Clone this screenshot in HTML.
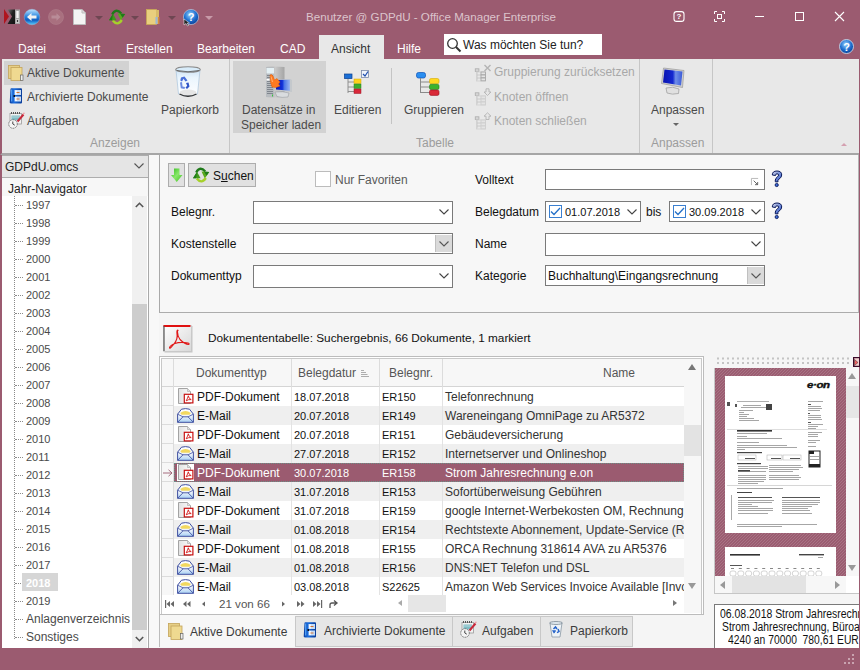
<!DOCTYPE html>
<html><head><meta charset="utf-8">
<style>
*{box-sizing:border-box;margin:0;padding:0}
html,body{width:860px;height:670px;overflow:hidden;background:#9b5b70;font-family:"Liberation Sans",sans-serif;font-size:12px;color:#222}
.a{position:absolute}
.t{position:absolute;white-space:nowrap;line-height:14px}
svg{position:absolute;overflow:visible}
.rb{color:#4a4a4a}
.gl{color:#9c9c9c}
.dis{color:#a8a8a8}
</style></head><body>
<!-- ============ TITLE BAR ============ -->
<!-- app logo -->
<svg style="left:4px;top:9px" width="17" height="16" viewBox="0 0 17 16">
<defs><linearGradient id="glogo" x1="0" y1="0" x2="1" y2="1"><stop offset="0" stop-color="#777"/><stop offset="0.45" stop-color="#222"/><stop offset="1" stop-color="#111"/></linearGradient></defs>
<polygon points="0,0 5,7.5 0,15" fill="#b0141e"/>
<polygon points="3.5,0.5 11,0.5 11,15 3.5,15 8,7.5" fill="url(#glogo)"/>
<rect x="11" y="0.5" width="5" height="14.5" fill="#a6a6a6"/>
<rect x="12.3" y="2" width="2.4" height="7" fill="#f4f4f4"/>
<rect x="12" y="10.5" width="3" height="3" fill="#f4f4f4"/>
<rect x="12.7" y="11.2" width="1.6" height="1.6" fill="#111"/>
</svg>
<!-- back -->
<svg style="left:24px;top:9px" width="16" height="16" viewBox="0 0 16 16">
<defs><linearGradient id="gb" x1="0" y1="0" x2="0" y2="1"><stop offset="0" stop-color="#bfe4ff"/><stop offset="0.45" stop-color="#2f8ae0"/><stop offset="0.7" stop-color="#0f5cc0"/><stop offset="1" stop-color="#5ad0ff"/></linearGradient></defs>
<circle cx="8" cy="8" r="7.8" fill="url(#gb)" stroke="#8fb8e0" stroke-width="0.4"/>
<path d="M3 8 L7.5 4 V6.5 H12.5 V9.5 H7.5 V12 Z" fill="#f2f2f2"/>
</svg>
<!-- forward disabled -->
<svg style="left:48px;top:9px" width="16" height="16" viewBox="0 0 16 16">
<circle cx="8" cy="8" r="7.5" fill="#a9707f" stroke="#b07d8b" stroke-width="0.6"/>
<path d="M12.5 8 L8.5 4.3 V6.6 H3.5 V9.4 H8.5 V11.7 Z" fill="#b98c98"/>
</svg>
<!-- new doc -->
<svg style="left:73px;top:9px" width="13" height="16" viewBox="0 0 13 16">
<path d="M0.5 0.5 H9 L12.5 4 V15.5 H0.5 Z" fill="#f4f4f4" stroke="#bdbdbd"/>
<path d="M9 0.5 V4 H12.5" fill="#ddd" stroke="#bdbdbd"/>
</svg>
<div class="a" style="left:95px;top:16px;width:0;height:0;border-left:4px solid transparent;border-right:4px solid transparent;border-top:4px solid #6e4652"></div>
<!-- refresh green -->
<svg style="left:108px;top:8px" width="18" height="18" viewBox="0 0 18 18">
<path d="M4.2 6.5 Q8 -0.5 13.2 5.5" fill="none" stroke="#1f7a1a" stroke-width="2.4"/>
<polygon points="9.5,5.5 17.2,6 12.8,12.5" fill="#5aa81e"/>
<polygon points="12,5.6 17.2,6 14.6,9.8" fill="#1f7a1a"/>
<path d="M13.8 12 Q9.5 18.5 4.8 12.5" fill="none" stroke="#a6d12a" stroke-width="2.4"/>
<polygon points="1,12.2 8.6,12.2 5,5.8" fill="#3f9a1a"/>
<polygon points="1,12.2 5,5.8 4,12.2" fill="#1f7a1a"/>
</svg>
<div class="a" style="left:131px;top:16px;width:0;height:0;border-left:4px solid transparent;border-right:4px solid transparent;border-top:4px solid #6e4652"></div>
<!-- folder -->
<svg style="left:146px;top:9px" width="14" height="16" viewBox="0 0 14 16">
<rect x="0.5" y="0.5" width="10" height="15" fill="#e9cf7e" stroke="#c9a855" stroke-width="0.8"/>
<rect x="10" y="1" width="3" height="14" fill="#d9bb68"/>
<rect x="9.5" y="8" width="2" height="7" fill="#9ab6d8"/>
<rect x="12" y="8" width="1.5" height="7" fill="#d88a3a"/>
</svg>
<div class="a" style="left:168px;top:16px;width:0;height:0;border-left:4px solid transparent;border-right:4px solid transparent;border-top:4px solid #6e4652"></div>
<!-- help circle -->
<svg style="left:183px;top:9px" width="16" height="16" viewBox="0 0 16 16">
<defs><radialGradient id="gh" cx="45%" cy="35%" r="65%"><stop offset="0" stop-color="#9ad4ff"/><stop offset="0.6" stop-color="#1e6fd0"/><stop offset="1" stop-color="#0b3f96"/></radialGradient></defs>
<circle cx="8" cy="8" r="7.6" fill="url(#gh)" stroke="#c8d8ea" stroke-width="0.6"/>
<text x="8" y="12" font-family="Liberation Sans" font-weight="bold" font-size="11" fill="#fff" text-anchor="middle">?</text>
<path d="M1 10 L1 16 L3 14.5 L4.5 17 L5.5 16.5 L4.3 14 L6.5 14 Z" fill="#222" stroke="#fff" stroke-width="0.5"/>
</svg>
<div class="a" style="left:205px;top:16px;width:0;height:0;border-left:4px solid transparent;border-right:4px solid transparent;border-top:4px solid #c79aa8"></div>

<div class="t" style="left:306px;top:10px;color:#dcc4cc;font-size:11.6px">Benutzer @ GDPdU - Office Manager Enterprise</div>

<!-- window buttons -->
<svg style="left:673px;top:11px" width="12" height="11" viewBox="0 0 12 11">
<rect x="1" y="0.6" width="10" height="9.8" rx="2.5" fill="none" stroke="#fff" stroke-width="1.1"/>
<text x="6" y="8.4" font-family="Liberation Sans" font-weight="bold" font-size="8" fill="#fff" text-anchor="middle">?</text>
</svg>
<svg style="left:714px;top:11px" width="11" height="11" viewBox="0 0 11 11">
<path d="M0.5 3 V0.5 H3 M8 0.5 H10.5 V3 M10.5 8 V10.5 H8 M3 10.5 H0.5 V8" fill="none" stroke="#fff" stroke-width="1"/>
<rect x="3.5" y="3.5" width="4" height="4" fill="none" stroke="#fff" stroke-width="1"/>
</svg>
<div class="a" style="left:755px;top:16px;width:9px;height:1px;background:#fff"></div>
<div class="a" style="left:795px;top:12px;width:9px;height:9px;border:1px solid #fff"></div>
<svg style="left:835px;top:12px" width="9" height="9" viewBox="0 0 9 9">
<path d="M0 0 L9 9 M9 0 L0 9" stroke="#fff" stroke-width="1.1"/>
</svg>

<!-- ============ TABS ============ -->
<div class="t" style="left:18px;top:42px;color:#fff">Datei</div>
<div class="t" style="left:75px;top:42px;color:#fff">Start</div>
<div class="t" style="left:126px;top:42px;color:#fff">Erstellen</div>
<div class="t" style="left:197px;top:42px;color:#fff">Bearbeiten</div>
<div class="t" style="left:280px;top:42px;color:#fff">CAD</div>
<div class="a" style="left:319px;top:35px;width:65px;height:25px;background:#e8e8e8"></div>
<div class="t" style="left:331px;top:42px;color:#333">Ansicht</div>
<div class="t" style="left:397px;top:42px;color:#fff">Hilfe</div>
<div class="a" style="left:444px;top:34px;width:158px;height:21px;background:#fff"></div>
<svg style="left:446px;top:37px" width="16" height="16" viewBox="0 0 16 16">
<circle cx="6.5" cy="6.5" r="4.8" fill="none" stroke="#333" stroke-width="1.3"/>
<path d="M10 10 L14.5 14.5" stroke="#333" stroke-width="2"/>
</svg>
<div class="t" style="left:463px;top:38px;color:#222">Was möchten Sie tun?</div>
<svg style="left:839px;top:39px" width="15" height="15" viewBox="0 0 15 15">
<circle cx="7.5" cy="7.5" r="7" fill="url(#gh)" stroke="#d8e4f0" stroke-width="0.8"/>
<text x="7.5" y="11.5" font-family="Liberation Sans" font-weight="bold" font-size="11" fill="#fff" text-anchor="middle">?</text>
</svg>

<!-- ============ RIBBON ============ -->
<div class="a" style="left:0;top:59px;width:859px;height:96px;background:#e8e8e8;border-left:2px solid #9b5b70;border-bottom:2px solid #a6a6a6"></div>

<!-- Anzeigen group -->
<div class="a" style="left:4px;top:61px;width:125px;height:24px;background:#d2d2d2"></div>
<svg style="left:8px;top:65px" width="16" height="16" viewBox="0 0 16 16">
<rect x="0.5" y="0.5" width="11" height="13" fill="#e6cf86" stroke="#c4a45a" stroke-width="0.8"/>
<rect x="3" y="2.5" width="11" height="13" fill="#efd990" stroke="#c4a45a" stroke-width="0.8"/>
<rect x="12.5" y="10" width="2.5" height="5.5" fill="#eee" stroke="#666" stroke-width="0.7"/>
</svg>
<div class="t rb" style="left:27px;top:66px">Aktive Dokumente</div>
<svg style="left:9px;top:88px" width="14" height="16" viewBox="0 0 14 16">
<defs><linearGradient id="ga1" x1="0" x2="1"><stop offset="0" stop-color="#0b3fa0"/><stop offset="0.35" stop-color="#1a6ee0"/><stop offset="1" stop-color="#0a3c98"/></linearGradient></defs>
<path d="M1.5 1 Q1.5 0.2 2.5 0.2 H12 Q13 0.2 13 1.2 V14.5 Q13 15.5 12 15.5 H2.5 Q0.7 15.5 0.7 14.5 Z" fill="url(#ga1)"/>
<rect x="2" y="1.5" width="1.3" height="12" fill="#5fb0ff" opacity="0.8"/>
<path d="M5.5 2 H12 V7 H5.5 Z" fill="#c8dcf4"/>
<path d="M5.5 8.5 H12 V13.5 H5.5 Z" fill="#c8dcf4"/>
<rect x="6" y="2.5" width="2" height="4" fill="#fff" opacity="0.8"/>
<rect x="6" y="9" width="2" height="4" fill="#fff" opacity="0.8"/>
<rect x="7.5" y="4" width="3" height="1" fill="#d07030"/>
<rect x="7.5" y="10.5" width="3" height="1" fill="#d07030"/>
<rect x="4.5" y="7" width="1.5" height="2" fill="#111"/>
</svg>
<div class="t rb" style="left:27px;top:90px">Archivierte Dokumente</div>
<svg style="left:8px;top:112px" width="17" height="17" viewBox="0 0 17 17">
<rect x="2" y="1.5" width="11.5" height="10.5" fill="#f2f2f2" stroke="#9a9a9a" stroke-width="0.8"/>
<g fill="#555"><rect x="3" y="0" width="1" height="2"/><rect x="5" y="0" width="1" height="2"/><rect x="7" y="0" width="1" height="2"/><rect x="9" y="0" width="1" height="2"/><rect x="11" y="0" width="1" height="2"/></g>
<rect x="3.5" y="3.5" width="8.5" height="5" fill="#7fbcc4"/>
<g fill="#e8f4f6"><rect x="4.5" y="4.5" width="1" height="1"/><rect x="6.5" y="4.5" width="1" height="1"/><rect x="8.5" y="4.5" width="1" height="1"/><rect x="10.5" y="4.5" width="1" height="1"/></g>
<path d="M9.5 9.5 L15.5 2.5" stroke="#c8283a" stroke-width="2"/>
<path d="M15 2 L16.5 0.8" stroke="#f0a0a8" stroke-width="1.5"/>
<circle cx="5" cy="12" r="4.3" fill="#f4f4f4" stroke="#666" stroke-width="0.9" stroke-dasharray="1.2 0.6"/>
<path d="M4.8 9.5 V12 L6.8 13.2" stroke="#333" stroke-width="0.9" fill="none"/>
</svg>
<div class="t rb" style="left:27px;top:114px">Aufgaben</div>
<svg style="left:168px;top:62px" width="40" height="40" viewBox="0 0 40 40">
<defs><linearGradient id="gt" x1="0" y1="0" x2="0" y2="1"><stop offset="0" stop-color="#cfe4f6"/><stop offset="0.3" stop-color="#eaf5fd"/><stop offset="1" stop-color="#ffffff"/></linearGradient></defs>
<path d="M8 8 L10.5 32 Q20 36 29.5 32 L32 8 Z" fill="url(#gt)" stroke="#a9c4dc" stroke-width="0.7"/>
<ellipse cx="20" cy="30.5" rx="8.5" ry="3" fill="#e6e6e6"/>
<path d="M11.5 32 Q20 36.5 28.5 32" fill="none" stroke="#333" stroke-width="1.3"/>
<ellipse cx="20" cy="7.5" rx="12.3" ry="2.8" fill="#d8ecfa" stroke="#8a8a8a" stroke-width="1.1"/>
<path d="M9 8.5 Q20 11 31 8.5" fill="none" stroke="#555" stroke-width="0.8"/>
<path d="M13 15.5 L16.5 14.5 L19.5 18.5 L17.5 19.5 L15.5 16.8 L14 19.5 L12.3 18.5 Z" fill="#4a70d8"/>
<path d="M12 20.5 L14 20 L14.5 24.5 L17 25 L16.5 27 L12.8 26.2 Z" fill="#6a8ae0"/>
<path d="M18 21 L20.5 20.5 L21.5 24.5 L19 27 L17.5 25.5 L19.2 23.8 Z" fill="#2f55c8"/>
</svg>
<div class="t rb" style="left:161px;top:103px">Papierkorb</div>
<div class="t gl" style="left:90px;top:136px">Anzeigen</div>
<div class="a" style="left:229px;top:59px;width:1px;height:94px;background:#c6c6c6"></div>
<!-- Tabelle group -->
<div class="a" style="left:233px;top:61px;width:93px;height:72px;background:#d2d2d2"></div>
<svg style="left:258px;top:62px" width="40" height="40" viewBox="0 0 40 40">
<defs><linearGradient id="gs" x1="0" x2="1"><stop offset="0" stop-color="#9a9a9a"/><stop offset="0.5" stop-color="#c9c9c9"/><stop offset="1" stop-color="#a5a5a5"/></linearGradient>
<linearGradient id="gm" x1="0" y1="0" x2="1" y2="0"><stop offset="0" stop-color="#0a18b8"/><stop offset="0.45" stop-color="#1030d8"/><stop offset="0.6" stop-color="#4d78e8"/><stop offset="1" stop-color="#9ab6f0"/></linearGradient></defs>
<path d="M8 5 L16 4.5 L26.5 5 V35 L16 35.5 L8 35 Z" fill="url(#gs)"/>
<rect x="8" y="5" width="8" height="30" fill="#b8bcc0"/>
<rect x="8.5" y="6" width="7.5" height="5.5" fill="#e4f0f4"/>
<g fill="#7a8088"><rect x="9" y="13" width="6" height="0.9"/><rect x="9" y="15" width="6" height="0.9"/><rect x="9" y="19" width="6" height="0.9"/><rect x="9" y="21" width="6" height="0.9"/><rect x="9" y="23" width="6" height="0.9"/><rect x="9" y="25" width="6" height="0.9"/><rect x="9" y="27" width="6" height="0.9"/><rect x="9" y="29" width="6" height="0.9"/><rect x="9" y="31" width="6" height="0.9"/></g>
<rect x="8.5" y="17" width="3" height="1.5" fill="#fff"/>
<rect x="14" y="32.5" width="1" height="2" fill="#3ac040"/>
<path d="M17.5 17.5 L32.5 17 L34 18 V30 L17.5 28.5 Z" fill="#c4c8cc"/>
<path d="M18 18 L32 17.8 V28.8 L18 27.5 Z" fill="url(#gm)"/>
<path d="M17 30 Q25 29 31 31 L30 35 Q24 36 19 34.5 Z" fill="#d9dcdf" stroke="#9a9ea2" stroke-width="0.6"/>
<path d="M12 13 Q13.5 11.5 15 14 L16.5 18 L19 16.5 L22 20 L20.5 22 L22 24 L18 25.5 L14 25 L12.5 20 Z" fill="#ff7a20" stroke="#e05a00" stroke-width="0.5"/>
<path d="M13 14.5 L14.5 20" stroke="#ffb070" stroke-width="1"/>
</svg>
<div class="t rb" style="left:242px;top:103px">Datensätze in</div>
<div class="t rb" style="left:241px;top:118px">Speicher laden</div>
<svg style="left:344px;top:70px" width="26" height="26" viewBox="0 0 26 26">
<rect x="0.5" y="4" width="7.5" height="4.6" fill="#1b6fd6" stroke="#0b3f8f" stroke-width="0.7"/>
<path d="M4 9 V23 M4 12 H10 M4 17 H10 M4 21.5 H10" stroke="#888" stroke-width="0.9" fill="none"/>
<rect x="10" y="9" width="7" height="4.5" fill="#ffd21a" stroke="#d8a800" stroke-width="0.5"/>
<rect x="10" y="14" width="7" height="4.5" fill="#3cae2c" stroke="#2a7f1f" stroke-width="0.5"/>
<rect x="10" y="19" width="7" height="4.5" fill="#d8283a" stroke="#9a1424" stroke-width="0.5"/>
<rect x="17.5" y="0.5" width="7" height="7" fill="#f0f4fa" stroke="#7a8aa8" stroke-width="0.8"/>
<path d="M19 4 L21 6 L24 1.5" stroke="#1f4fb0" stroke-width="1.2" fill="none"/>
</svg>
<div class="t rb" style="left:334px;top:103px">Editieren</div>
<div class="a" style="left:391px;top:68px;width:1px;height:56px;background:#c4c4c4"></div>
<svg style="left:416px;top:72px" width="24" height="24" viewBox="0 0 24 24">
<rect x="0.5" y="0.5" width="9" height="5.5" rx="2" fill="#2a8ef0" stroke="#0d52b8" stroke-width="0.7"/>
<path d="M4.5 6 V21 M4.5 10 H14 M4.5 15 H14 M4.5 20.5 H14" stroke="#8a8a8a" stroke-width="1" fill="none"/>
<rect x="13.5" y="6.5" width="9.5" height="5.2" rx="1.6" fill="#ffd920" stroke="#d7aa00" stroke-width="0.6"/>
<rect x="13.5" y="12.3" width="9.5" height="5.2" rx="1.6" fill="#3db32c" stroke="#257d1b" stroke-width="0.6"/>
<rect x="13.5" y="18" width="9.5" height="5.4" rx="1.6" fill="#d92a38" stroke="#9a1020" stroke-width="0.6"/>
</svg>
<div class="t rb" style="left:404px;top:103px">Gruppieren</div>
<svg style="left:474px;top:64px" width="18" height="18" viewBox="0 0 18 18">
<rect x="1.3" y="4.8" width="3.6" height="2.6" fill="#d8d8d8" stroke="#b0b0b0" stroke-width="0.9"/>
<path d="M3 7.5 V16.5 M3 11 H7 M3 14 H7" stroke="#c6c6c6" stroke-width="0.9" fill="none"/>
<rect x="2.5" y="8" width="9" height="9" fill="none" stroke="#d0d0d0" stroke-width="0.8"/>
<rect x="7" y="8" width="4.5" height="2.8" fill="#e4e4e4" stroke="#a8a8a8" stroke-width="0.9"/>
<rect x="7" y="11" width="4.5" height="2.8" fill="#e4e4e4" stroke="#a8a8a8" stroke-width="0.9"/>
<rect x="7" y="14" width="4.5" height="2.8" fill="#e4e4e4" stroke="#a8a8a8" stroke-width="0.9"/>
<path d="M10.5 1 L16.5 7 M16.5 1 L10.5 7" stroke="#b4b4b4" stroke-width="1.4"/>
</svg>
<div class="t dis" style="left:494px;top:65px">Gruppierung zurücksetzen</div>
<svg style="left:474px;top:88px" width="18" height="18" viewBox="0 0 18 18">
<rect x="1.3" y="4.8" width="3.6" height="2.6" fill="#d8d8d8" stroke="#b0b0b0" stroke-width="0.9"/>
<path d="M3 7.5 V16.5 M3 11 H7 M3 14 H7" stroke="#c6c6c6" stroke-width="0.9" fill="none"/>
<rect x="2.5" y="8" width="9" height="9" fill="none" stroke="#d0d0d0" stroke-width="0.8"/>
<rect x="7" y="8" width="4.5" height="2.8" fill="#e4e4e4" stroke="#cfcfcf" stroke-width="0.9"/>
<rect x="7" y="11" width="4.5" height="2.8" fill="#e4e4e4" stroke="#cfcfcf" stroke-width="0.9"/>
<rect x="7" y="14" width="4.5" height="2.8" fill="#e4e4e4" stroke="#cfcfcf" stroke-width="0.9"/>
<path d="M12 0.8 H15 V4 H17 L13.5 7.5 L10 4 H12 Z" fill="#e6e6e6" stroke="#b4b4b4" stroke-width="0.9"/>
</svg>
<div class="t dis" style="left:494px;top:90px">Knoten öffnen</div>
<svg style="left:474px;top:112px" width="18" height="18" viewBox="0 0 18 18">
<rect x="1.3" y="4.8" width="3.6" height="2.6" fill="#d8d8d8" stroke="#b0b0b0" stroke-width="0.9"/>
<path d="M3 7.5 V16.5 M3 11 H7 M3 14 H7" stroke="#c6c6c6" stroke-width="0.9" fill="none"/>
<rect x="2.5" y="8" width="9" height="9" fill="none" stroke="#d0d0d0" stroke-width="0.8"/>
<rect x="7" y="8" width="4.5" height="2.8" fill="#e4e4e4" stroke="#cfcfcf" stroke-width="0.9"/>
<rect x="7" y="11" width="4.5" height="2.8" fill="#e4e4e4" stroke="#cfcfcf" stroke-width="0.9"/>
<rect x="7" y="14" width="4.5" height="2.8" fill="#e4e4e4" stroke="#cfcfcf" stroke-width="0.9"/>
<path d="M12 7.5 H15 V4.2 H17 L13.5 0.8 L10 4.2 H12 Z" fill="#e6e6e6" stroke="#b4b4b4" stroke-width="0.9"/>
</svg>
<div class="t dis" style="left:494px;top:114px">Knoten schließen</div>
<div class="t gl" style="left:416px;top:136px">Tabelle</div>
<div class="a" style="left:639px;top:59px;width:1px;height:94px;background:#c6c6c6"></div>
<!-- Anpassen -->
<svg style="left:652px;top:62px" width="40" height="40" viewBox="0 0 40 40">
<defs><linearGradient id="gmon" x1="0" y1="0" x2="1" y2="0"><stop offset="0" stop-color="#0a14b0"/><stop offset="0.5" stop-color="#1428d0"/><stop offset="0.65" stop-color="#6f8ee8"/><stop offset="1" stop-color="#3a5ad8"/></linearGradient></defs>
<path d="M14 26 Q21 24 27 27 L26.5 31.5 Q20 33 15 31 Z" fill="#e0e0e0" stroke="#9a9a9a" stroke-width="0.7"/>
<path d="M11.5 6 L32 8.5 L30.5 25.5 L9.5 21.5 Z" fill="#cfcfcf" stroke="#9a9a9a" stroke-width="0.7"/>
<path d="M12.5 7.5 L30.5 9.5 L29 23.5 L11 20.5 Z" fill="url(#gmon)"/>
</svg>
<div class="t rb" style="left:651px;top:103px">Anpassen</div>
<div class="a" style="left:673px;top:123px;width:0;height:0;border-left:3px solid transparent;border-right:3px solid transparent;border-top:3px solid #666"></div>
<div class="t gl" style="left:651px;top:136px">Anpassen</div>
<div class="a" style="left:712px;top:59px;width:1px;height:94px;background:#c6c6c6"></div>
<div class="a" style="left:841px;top:143px;width:0;height:0;border-left:3px solid transparent;border-right:3px solid transparent;border-bottom:3px solid #d4a0b0"></div>

<!-- ============ LEFT PANEL ============ -->
<div class="a" style="left:2px;top:155px;width:147px;height:493px;background:#fff"></div>
<div class="a" style="left:2px;top:155px;width:147px;height:23px;background:#e5e5e5;border:1px solid #adadad;border-left:none"></div>
<div class="t" style="left:5px;top:160px;color:#222">GDPdU.omcs</div>
<svg style="left:134px;top:163px" width="10" height="6" viewBox="0 0 10 6"><path d="M0.5 0.5 L5 5 L9.5 0.5" fill="none" stroke="#555" stroke-width="1.1"/></svg>
<div class="a" style="left:2px;top:178px;width:146px;height:18px;background:#f7f7f7"></div>
<div class="t" style="left:8px;top:182px;color:#222">Jahr-Navigator</div>
<div class="a" style="left:14px;top:196px;width:0;height:443px;border-left:1px dotted #8a8a8a"></div>
<div class="a" style="left:15px;top:205px;width:8px;height:0;border-top:1px dotted #8a8a8a"></div>
<div class="t" style="left:26px;top:198px;color:#4a4a4a;font-size:11px">1997</div>
<div class="a" style="left:15px;top:223px;width:8px;height:0;border-top:1px dotted #8a8a8a"></div>
<div class="t" style="left:26px;top:216px;color:#4a4a4a;font-size:11px">1998</div>
<div class="a" style="left:15px;top:241px;width:8px;height:0;border-top:1px dotted #8a8a8a"></div>
<div class="t" style="left:26px;top:234px;color:#4a4a4a;font-size:11px">1999</div>
<div class="a" style="left:15px;top:259px;width:8px;height:0;border-top:1px dotted #8a8a8a"></div>
<div class="t" style="left:26px;top:252px;color:#4a4a4a;font-size:11px">2000</div>
<div class="a" style="left:15px;top:277px;width:8px;height:0;border-top:1px dotted #8a8a8a"></div>
<div class="t" style="left:26px;top:270px;color:#4a4a4a;font-size:11px">2001</div>
<div class="a" style="left:15px;top:295px;width:8px;height:0;border-top:1px dotted #8a8a8a"></div>
<div class="t" style="left:26px;top:288px;color:#4a4a4a;font-size:11px">2002</div>
<div class="a" style="left:15px;top:313px;width:8px;height:0;border-top:1px dotted #8a8a8a"></div>
<div class="t" style="left:26px;top:306px;color:#4a4a4a;font-size:11px">2003</div>
<div class="a" style="left:15px;top:331px;width:8px;height:0;border-top:1px dotted #8a8a8a"></div>
<div class="t" style="left:26px;top:324px;color:#4a4a4a;font-size:11px">2004</div>
<div class="a" style="left:15px;top:349px;width:8px;height:0;border-top:1px dotted #8a8a8a"></div>
<div class="t" style="left:26px;top:342px;color:#4a4a4a;font-size:11px">2005</div>
<div class="a" style="left:15px;top:367px;width:8px;height:0;border-top:1px dotted #8a8a8a"></div>
<div class="t" style="left:26px;top:360px;color:#4a4a4a;font-size:11px">2006</div>
<div class="a" style="left:15px;top:385px;width:8px;height:0;border-top:1px dotted #8a8a8a"></div>
<div class="t" style="left:26px;top:378px;color:#4a4a4a;font-size:11px">2007</div>
<div class="a" style="left:15px;top:403px;width:8px;height:0;border-top:1px dotted #8a8a8a"></div>
<div class="t" style="left:26px;top:396px;color:#4a4a4a;font-size:11px">2008</div>
<div class="a" style="left:15px;top:421px;width:8px;height:0;border-top:1px dotted #8a8a8a"></div>
<div class="t" style="left:26px;top:414px;color:#4a4a4a;font-size:11px">2009</div>
<div class="a" style="left:15px;top:439px;width:8px;height:0;border-top:1px dotted #8a8a8a"></div>
<div class="t" style="left:26px;top:432px;color:#4a4a4a;font-size:11px">2010</div>
<div class="a" style="left:15px;top:457px;width:8px;height:0;border-top:1px dotted #8a8a8a"></div>
<div class="t" style="left:26px;top:450px;color:#4a4a4a;font-size:11px">2011</div>
<div class="a" style="left:15px;top:475px;width:8px;height:0;border-top:1px dotted #8a8a8a"></div>
<div class="t" style="left:26px;top:468px;color:#4a4a4a;font-size:11px">2012</div>
<div class="a" style="left:15px;top:493px;width:8px;height:0;border-top:1px dotted #8a8a8a"></div>
<div class="t" style="left:26px;top:486px;color:#4a4a4a;font-size:11px">2013</div>
<div class="a" style="left:15px;top:511px;width:8px;height:0;border-top:1px dotted #8a8a8a"></div>
<div class="t" style="left:26px;top:504px;color:#4a4a4a;font-size:11px">2014</div>
<div class="a" style="left:15px;top:529px;width:8px;height:0;border-top:1px dotted #8a8a8a"></div>
<div class="t" style="left:26px;top:522px;color:#4a4a4a;font-size:11px">2015</div>
<div class="a" style="left:15px;top:547px;width:8px;height:0;border-top:1px dotted #8a8a8a"></div>
<div class="t" style="left:26px;top:540px;color:#4a4a4a;font-size:11px">2016</div>
<div class="a" style="left:15px;top:565px;width:8px;height:0;border-top:1px dotted #8a8a8a"></div>
<div class="t" style="left:26px;top:558px;color:#4a4a4a;font-size:11px">2017</div>
<div class="a" style="left:15px;top:583px;width:8px;height:0;border-top:1px dotted #8a8a8a"></div>
<div class="a" style="left:22px;top:573px;width:36px;height:18px;background:#d6d6d6"></div>
<div class="t" style="left:26px;top:576px;color:#fff;font-weight:bold;font-size:11px">2018</div>
<div class="a" style="left:15px;top:601px;width:8px;height:0;border-top:1px dotted #8a8a8a"></div>
<div class="t" style="left:26px;top:594px;color:#4a4a4a;font-size:11px">2019</div>
<div class="a" style="left:15px;top:619px;width:8px;height:0;border-top:1px dotted #8a8a8a"></div>
<div class="t" style="left:26px;top:612px;color:#4a4a4a;font-size:12px">Anlagenverzeichnis</div>
<div class="a" style="left:15px;top:637px;width:8px;height:0;border-top:1px dotted #8a8a8a"></div>
<div class="t" style="left:26px;top:630px;color:#4a4a4a;font-size:12px">Sonstiges</div>

<div class="a" style="left:132px;top:196px;width:15px;height:452px;background:#f0f0f0"></div>
<div class="a" style="left:132px;top:304px;width:15px;height:326px;background:#cdcdcd"></div>
<svg style="left:135px;top:202px" width="9" height="6" viewBox="0 0 9 6"><path d="M0.8 5 L4.5 1.3 L8.2 5" fill="none" stroke="#555" stroke-width="1.6"/></svg>
<svg style="left:135px;top:636px" width="9" height="6" viewBox="0 0 9 6"><path d="M0.8 1 L4.5 4.7 L8.2 1" fill="none" stroke="#555" stroke-width="1.6"/></svg>
<div class="a" style="left:148px;top:155px;width:1px;height:493px;background:#a9a9a9"></div>
<div class="a" style="left:149px;top:155px;width:10px;height:493px;background:#f8f8f8"></div>

<!-- ============ SEARCH PANEL ============ -->
<div class="a" style="left:159px;top:155px;width:700px;height:158px;background:#f7f7f7;border-left:1px solid #a9a9a9;border-right:1px solid #b5b5b5;border-bottom:1px solid #acacac"></div>
<div class="a" style="left:168px;top:163px;width:17px;height:24px;background:#e1e1e1;border:1px solid #adadad"></div>
<svg style="left:171px;top:168px" width="12" height="15" viewBox="0 0 12 15">
<defs><linearGradient id="gg" x1="0" y1="0" x2="1" y2="1"><stop offset="0" stop-color="#2fb81c"/><stop offset="0.5" stop-color="#8ae86a"/><stop offset="1" stop-color="#3cc01e"/></linearGradient></defs>
<path d="M3 0.5 H8.5 V7 H11.5 L5.75 14 L0 7 H3 Z" fill="url(#gg)"/>
</svg>
<div class="a" style="left:188px;top:163px;width:68px;height:24px;background:#e1e1e1;border:1px solid #adadad"></div>
<svg style="left:192px;top:166px" width="18" height="18" viewBox="0 0 18 18">
<path d="M4.2 6.5 Q8 -0.5 13.2 5.5" fill="none" stroke="#1f7a1a" stroke-width="2.4"/>
<polygon points="9.5,5.5 17.2,6 12.8,12.5" fill="#5aa81e"/>
<polygon points="12,5.6 17.2,6 14.6,9.8" fill="#1f7a1a"/>
<path d="M13.8 12 Q9.5 18.5 4.8 12.5" fill="none" stroke="#a6d12a" stroke-width="2.4"/>
<polygon points="1,12.2 8.6,12.2 5,5.8" fill="#3f9a1a"/>
<polygon points="1,12.2 5,5.8 4,12.2" fill="#1f7a1a"/>
</svg>
<div class="t" style="left:213px;top:169px;color:#111">S<span style="text-decoration:underline">u</span>chen</div>
<div class="a" style="left:315px;top:171px;width:16px;height:16px;background:#fff;border:1px solid #bcbcbc"></div>
<div class="t" style="left:335px;top:173px;color:#5a5a5a">Nur Favoriten</div>

<div class="t" style="left:171px;top:205px;color:#111">Belegnr.</div>
<div class="t" style="left:171px;top:237px;color:#111">Kostenstelle</div>
<div class="t" style="left:171px;top:269px;color:#111">Dokumenttyp</div>
<div class="a" style="left:253px;top:201px;width:200px;height:23px;background:#fff;border:1px solid #7a7a7a"></div>
<svg style="left:439px;top:209px" width="10" height="6" viewBox="0 0 10 6"><path d="M0.5 0.5 L5 5 L9.5 0.5" fill="none" stroke="#444" stroke-width="1.1"/></svg>
<div class="a" style="left:253px;top:233px;width:200px;height:21px;background:#fff;border:1px solid #7a7a7a"></div>
<div class="a" style="left:435px;top:235px;width:17px;height:17px;background:#dadada;border-left:1px solid #c0c0c0"></div>
<svg style="left:439px;top:241px" width="10" height="6" viewBox="0 0 10 6"><path d="M0.5 0.5 L5 5 L9.5 0.5" fill="none" stroke="#555" stroke-width="1.1"/></svg>
<div class="a" style="left:253px;top:265px;width:200px;height:23px;background:#fff;border:1px solid #7a7a7a"></div>
<svg style="left:439px;top:273px" width="10" height="6" viewBox="0 0 10 6"><path d="M0.5 0.5 L5 5 L9.5 0.5" fill="none" stroke="#444" stroke-width="1.1"/></svg>

<div class="t" style="left:475px;top:173px;color:#111">Volltext</div>
<div class="t" style="left:475px;top:205px;color:#111">Belegdatum</div>
<div class="t" style="left:475px;top:237px;color:#111">Name</div>
<div class="t" style="left:475px;top:269px;color:#111">Kategorie</div>
<div class="a" style="left:545px;top:169px;width:220px;height:21px;background:#fff;border:1px solid #7a7a7a"></div>
<svg style="left:751px;top:178px" width="8" height="8" viewBox="0 0 9 9"><path d="M0.5 8 V0.5 H8" fill="none" stroke="#aaa" stroke-width="0.9"/><path d="M3 3 L7.5 7.5 M4.5 7.5 H7.5 V4.5" fill="none" stroke="#555" stroke-width="1"/></svg>
<svg style="left:771px;top:170px" width="12" height="18" viewBox="0 0 12 18">
<defs><linearGradient id="gq1" x1="0" y1="0" x2="1" y2="1"><stop offset="0" stop-color="#d8d8e8"/><stop offset="0.5" stop-color="#7890d8"/><stop offset="1" stop-color="#2f5ad0"/></linearGradient></defs>
<path d="M1.3 5 Q1.3 1 6 1 Q10.7 1 10.7 5 Q10.7 7.2 8.2 9 L7 10.3 V11.8 H4.3 V10 Q4.5 8.3 6.5 6.8 Q7.6 6 7.6 5 Q7.6 3.8 6 3.8 Q4.5 3.8 4.5 5.5 Z" fill="url(#gq1)" stroke="#0a1a5a" stroke-width="1"/>
<circle cx="5.7" cy="15" r="1.6" fill="#3a6ad8" stroke="#0a1a5a" stroke-width="0.9"/>
</svg>
<div class="a" style="left:545px;top:201px;width:96px;height:21px;background:#fff;border:1px solid #7a7a7a"></div>
<div class="a" style="left:549px;top:205px;width:13px;height:13px;background:#fff;border:1px solid #3a7fd0"></div>
<svg style="left:550px;top:207px" width="11" height="9" viewBox="0 0 11 9"><path d="M1 4.5 L4 7.5 L10 1" fill="none" stroke="#2470c8" stroke-width="1.3"/></svg>
<div class="t" style="left:565px;top:205px;color:#111;font-size:11px">01.07.2018</div>
<svg style="left:627px;top:209px" width="10" height="6" viewBox="0 0 10 6"><path d="M0.5 0.5 L5 5 L9.5 0.5" fill="none" stroke="#444" stroke-width="1.1"/></svg>
<div class="t" style="left:646px;top:205px;color:#111">bis</div>
<div class="a" style="left:669px;top:201px;width:96px;height:21px;background:#fff;border:1px solid #7a7a7a"></div>
<div class="a" style="left:673px;top:205px;width:13px;height:13px;background:#fff;border:1px solid #3a7fd0"></div>
<svg style="left:674px;top:207px" width="11" height="9" viewBox="0 0 11 9"><path d="M1 4.5 L4 7.5 L10 1" fill="none" stroke="#2470c8" stroke-width="1.3"/></svg>
<div class="t" style="left:689px;top:205px;color:#111;font-size:11px">30.09.2018</div>
<svg style="left:751px;top:209px" width="10" height="6" viewBox="0 0 10 6"><path d="M0.5 0.5 L5 5 L9.5 0.5" fill="none" stroke="#444" stroke-width="1.1"/></svg>
<svg style="left:771px;top:202px" width="12" height="18" viewBox="0 0 12 18">
<defs><linearGradient id="gq2" x1="0" y1="0" x2="1" y2="1"><stop offset="0" stop-color="#d8d8e8"/><stop offset="0.5" stop-color="#7890d8"/><stop offset="1" stop-color="#2f5ad0"/></linearGradient></defs>
<path d="M1.3 5 Q1.3 1 6 1 Q10.7 1 10.7 5 Q10.7 7.2 8.2 9 L7 10.3 V11.8 H4.3 V10 Q4.5 8.3 6.5 6.8 Q7.6 6 7.6 5 Q7.6 3.8 6 3.8 Q4.5 3.8 4.5 5.5 Z" fill="url(#gq2)" stroke="#0a1a5a" stroke-width="1"/>
<circle cx="5.7" cy="15" r="1.6" fill="#3a6ad8" stroke="#0a1a5a" stroke-width="0.9"/>
</svg>
<div class="a" style="left:545px;top:233px;width:220px;height:23px;background:#fff;border:1px solid #7a7a7a"></div>
<svg style="left:751px;top:241px" width="10" height="6" viewBox="0 0 10 6"><path d="M0.5 0.5 L5 5 L9.5 0.5" fill="none" stroke="#444" stroke-width="1.1"/></svg>
<div class="a" style="left:545px;top:265px;width:220px;height:21px;background:#fff;border:1px solid #7a7a7a"></div>
<div class="a" style="left:747px;top:267px;width:17px;height:17px;background:#dadada;border-left:1px solid #c0c0c0"></div>
<svg style="left:751px;top:273px" width="10" height="6" viewBox="0 0 10 6"><path d="M0.5 0.5 L5 5 L9.5 0.5" fill="none" stroke="#555" stroke-width="1.1"/></svg>
<div class="t" style="left:548px;top:269px;color:#111">Buchhaltung\Eingangsrechnung</div>

<!-- area under search panel -->
<div class="a" style="left:159px;top:313px;width:700px;height:335px;background:#f5f5f5"></div>

<!-- ============ DOC TABLE ============ -->
<svg style="left:163px;top:325px" width="30" height="28" viewBox="0 0 30 28">
<defs><linearGradient id="gp" x1="0" y1="0" x2="1" y2="1"><stop offset="0" stop-color="#ffffff"/><stop offset="1" stop-color="#d8d8d8"/></linearGradient></defs>
<rect x="1.5" y="1" width="28" height="26.5" fill="#9a9a9a" opacity="0.5"/>
<rect x="0.5" y="0.5" width="28" height="26" fill="url(#gp)" stroke="#bbb" stroke-width="0.5"/>
<rect x="0.5" y="0" width="27" height="2" fill="#e01010"/>
<rect x="0" y="1" width="2" height="25" fill="#555" opacity="0.6"/>
<path d="M15 5 Q13.5 5 14 9 Q15 14 11 19 Q7 24 6.5 23 Q6 21 12 18.5 Q17 16.5 25 18 Q27 19 25.5 19.5 Q22 19.5 17 14.5 Q14.5 11 14.5 7 Q14.5 4.5 15.5 5.5" fill="none" stroke="#e01818" stroke-width="1.1"/>
</svg>
<div class="t" style="left:208px;top:331px;color:#111;font-size:11.8px">Dokumententabelle: Suchergebnis, 66 Dokumente, 1 markiert</div>

<div class="a" style="left:159px;top:356px;width:545px;height:259px;background:#fff;border:1px solid #bcbcbc"></div>
<div class="a" style="left:161px;top:358px;width:541px;height:256px;background:#fff;border:1px solid #c8c8c8;border-bottom:none"></div>
<!-- header -->
<div class="a" style="left:162px;top:359px;width:522px;height:28px;background:#f7f7f7;border-bottom:1px solid #d5d5d5"></div>
<div class="a" style="left:162px;top:387px;width:11px;height:208px;background:#f7f7f7"></div>
<div class="a" style="left:173px;top:359px;width:1px;height:236px;background:#dcdcdc"></div>
<div class="a" style="left:291px;top:359px;width:1px;height:236px;background:#dcdcdc"></div>
<div class="a" style="left:379px;top:359px;width:1px;height:236px;background:#dcdcdc"></div>
<div class="a" style="left:442px;top:359px;width:1px;height:236px;background:#dcdcdc"></div>
<div class="t" style="left:196px;top:366px;color:#555">Dokumenttyp</div>
<div class="t" style="left:298px;top:366px;color:#555">Belegdatur</div>
<svg style="left:361px;top:370px" width="8" height="7" viewBox="0 0 8 7"><path d="M0 0.5 H3 M0 2.5 H5 M0 4.5 H6.5 M0 6.5 H8" stroke="#999" stroke-width="0.8"/></svg>
<div class="t" style="left:389px;top:366px;color:#555">Belegnr.</div>
<div class="t" style="left:603px;top:366px;color:#555">Name</div>
<div class="a" style="left:174px;top:387px;width:510px;height:19px;background:#ffffff"></div>
<div class="a" style="left:162px;top:405px;width:11px;height:1px;background:#dcdcdc"></div>
<div class="a" style="left:291px;top:387px;width:1px;height:19px;background:#e3e3e3"></div>
<div class="a" style="left:379px;top:387px;width:1px;height:19px;background:#e3e3e3"></div>
<div class="a" style="left:442px;top:387px;width:1px;height:19px;background:#e3e3e3"></div>
<svg style="left:178px;top:388px" width="16" height="16" viewBox="0 0 16 16">
<defs><linearGradient id="gpg" x1="0" x2="1"><stop offset="0" stop-color="#e2e2e2"/><stop offset="1" stop-color="#fbfbfb"/></linearGradient></defs>
<path d="M0.5 0.5 H9.5 L12.5 3.5 V15.5 H0.5 Z" fill="url(#gpg)" stroke="#9a9a9a" stroke-width="0.9"/>
<path d="M9.5 0.5 V3.5 H12.5" fill="#e0e0e0" stroke="#b0b0b0" stroke-width="0.7"/>
<rect x="6.3" y="6.3" width="8.6" height="8.6" fill="#fff" stroke="#c81010" stroke-width="1.2"/>
<path d="M8.2 12.8 Q9.8 10 10.3 7.8 Q10.6 10.5 13.2 11.6 Q10.5 11.2 8.2 12.8" fill="none" stroke="#d01818" stroke-width="0.9"/>
</svg>
<div class="t" style="left:197px;top:390px;color:#111">PDF-Dokument</div>
<div class="t" style="left:294px;top:390px;color:#111;font-size:11px">18.07.2018</div>
<div class="t" style="left:382px;top:390px;color:#111;font-size:11px">ER150</div>
<div class="a" style="left:443px;top:387px;width:241px;height:19px;overflow:hidden"><div class="t" style="left:2px;top:3px;color:#333">Telefonrechnung</div></div>
<div class="a" style="left:174px;top:406px;width:510px;height:19px;background:#efefef"></div>
<div class="a" style="left:162px;top:424px;width:11px;height:1px;background:#dcdcdc"></div>
<div class="a" style="left:291px;top:406px;width:1px;height:19px;background:#e3e3e3"></div>
<div class="a" style="left:379px;top:406px;width:1px;height:19px;background:#e3e3e3"></div>
<div class="a" style="left:442px;top:406px;width:1px;height:19px;background:#e3e3e3"></div>
<svg style="left:177px;top:408px" width="17" height="15" viewBox="0 0 17 15">
<defs><linearGradient id="ge1" x1="0" y1="0" x2="0" y2="1"><stop offset="0" stop-color="#ffffff"/><stop offset="0.55" stop-color="#eef4fb"/><stop offset="1" stop-color="#a8d0f4"/></linearGradient></defs>
<path d="M0.6 6.2 L4.5 1.2 Q8.5 0 12.5 1.2 L16.4 6.2 V14.3 H0.6 Z" fill="url(#ge1)" stroke="#3f4fa0" stroke-width="1"/>
<path d="M3.2 5 Q8.5 0.8 13.8 5 L12.5 6.8 H4.5 Z" fill="#f2d860"/>
<path d="M0.6 14.3 L6 8.8 H11 L16.4 14.3" fill="none" stroke="#3f4fa0" stroke-width="0.9"/>
<path d="M0.6 6.2 L6 8.8 M16.4 6.2 L11 8.8" fill="none" stroke="#3f4fa0" stroke-width="0.8"/>
</svg>
<div class="t" style="left:197px;top:409px;color:#111">E-Mail</div>
<div class="t" style="left:294px;top:409px;color:#111;font-size:11px">20.07.2018</div>
<div class="t" style="left:382px;top:409px;color:#111;font-size:11px">ER149</div>
<div class="a" style="left:443px;top:406px;width:241px;height:19px;overflow:hidden"><div class="t" style="left:2px;top:3px;color:#333">Wareneingang OmniPage zu AR5372</div></div>
<div class="a" style="left:174px;top:425px;width:510px;height:19px;background:#ffffff"></div>
<div class="a" style="left:162px;top:443px;width:11px;height:1px;background:#dcdcdc"></div>
<div class="a" style="left:291px;top:425px;width:1px;height:19px;background:#e3e3e3"></div>
<div class="a" style="left:379px;top:425px;width:1px;height:19px;background:#e3e3e3"></div>
<div class="a" style="left:442px;top:425px;width:1px;height:19px;background:#e3e3e3"></div>
<svg style="left:178px;top:426px" width="16" height="16" viewBox="0 0 16 16">
<defs><linearGradient id="gpg" x1="0" x2="1"><stop offset="0" stop-color="#e2e2e2"/><stop offset="1" stop-color="#fbfbfb"/></linearGradient></defs>
<path d="M0.5 0.5 H9.5 L12.5 3.5 V15.5 H0.5 Z" fill="url(#gpg)" stroke="#9a9a9a" stroke-width="0.9"/>
<path d="M9.5 0.5 V3.5 H12.5" fill="#e0e0e0" stroke="#b0b0b0" stroke-width="0.7"/>
<rect x="6.3" y="6.3" width="8.6" height="8.6" fill="#fff" stroke="#c81010" stroke-width="1.2"/>
<path d="M8.2 12.8 Q9.8 10 10.3 7.8 Q10.6 10.5 13.2 11.6 Q10.5 11.2 8.2 12.8" fill="none" stroke="#d01818" stroke-width="0.9"/>
</svg>
<div class="t" style="left:197px;top:428px;color:#111">PDF-Dokument</div>
<div class="t" style="left:294px;top:428px;color:#111;font-size:11px">20.07.2018</div>
<div class="t" style="left:382px;top:428px;color:#111;font-size:11px">ER151</div>
<div class="a" style="left:443px;top:425px;width:241px;height:19px;overflow:hidden"><div class="t" style="left:2px;top:3px;color:#333">Gebäudeversicherung</div></div>
<div class="a" style="left:174px;top:444px;width:510px;height:19px;background:#efefef"></div>
<div class="a" style="left:162px;top:462px;width:11px;height:1px;background:#dcdcdc"></div>
<div class="a" style="left:291px;top:444px;width:1px;height:19px;background:#e3e3e3"></div>
<div class="a" style="left:379px;top:444px;width:1px;height:19px;background:#e3e3e3"></div>
<div class="a" style="left:442px;top:444px;width:1px;height:19px;background:#e3e3e3"></div>
<svg style="left:177px;top:446px" width="17" height="15" viewBox="0 0 17 15">
<defs><linearGradient id="ge3" x1="0" y1="0" x2="0" y2="1"><stop offset="0" stop-color="#ffffff"/><stop offset="0.55" stop-color="#eef4fb"/><stop offset="1" stop-color="#a8d0f4"/></linearGradient></defs>
<path d="M0.6 6.2 L4.5 1.2 Q8.5 0 12.5 1.2 L16.4 6.2 V14.3 H0.6 Z" fill="url(#ge3)" stroke="#3f4fa0" stroke-width="1"/>
<path d="M3.2 5 Q8.5 0.8 13.8 5 L12.5 6.8 H4.5 Z" fill="#f2d860"/>
<path d="M0.6 14.3 L6 8.8 H11 L16.4 14.3" fill="none" stroke="#3f4fa0" stroke-width="0.9"/>
<path d="M0.6 6.2 L6 8.8 M16.4 6.2 L11 8.8" fill="none" stroke="#3f4fa0" stroke-width="0.8"/>
</svg>
<div class="t" style="left:197px;top:447px;color:#111">E-Mail</div>
<div class="t" style="left:294px;top:447px;color:#111;font-size:11px">27.07.2018</div>
<div class="t" style="left:382px;top:447px;color:#111;font-size:11px">ER152</div>
<div class="a" style="left:443px;top:444px;width:241px;height:19px;overflow:hidden"><div class="t" style="left:2px;top:3px;color:#333">Internetserver und Onlineshop</div></div>
<div class="a" style="left:174px;top:463px;width:510px;height:19px;background:#9b5b70"></div>
<div class="a" style="left:162px;top:481px;width:11px;height:1px;background:#dcdcdc"></div>
<div class="a" style="left:174px;top:463px;width:510px;height:19px;border:1px dotted #6a9088"></div>
<svg style="left:163px;top:469px" width="10" height="8" viewBox="0 0 10 8"><path d="M0 4 H9 M5.5 0.8 L9 4 L5.5 7.2" fill="none" stroke="#9b5b70" stroke-width="0.9"/></svg>
<div class="a" style="left:177px;top:464px;width:17px;height:17px;background:#fff"></div>
<svg style="left:178px;top:464px" width="16" height="16" viewBox="0 0 16 16">
<defs><linearGradient id="gpg" x1="0" x2="1"><stop offset="0" stop-color="#e2e2e2"/><stop offset="1" stop-color="#fbfbfb"/></linearGradient></defs>
<path d="M0.5 0.5 H9.5 L12.5 3.5 V15.5 H0.5 Z" fill="url(#gpg)" stroke="#9a9a9a" stroke-width="0.9"/>
<path d="M9.5 0.5 V3.5 H12.5" fill="#e0e0e0" stroke="#b0b0b0" stroke-width="0.7"/>
<rect x="6.3" y="6.3" width="8.6" height="8.6" fill="#fff" stroke="#c81010" stroke-width="1.2"/>
<path d="M8.2 12.8 Q9.8 10 10.3 7.8 Q10.6 10.5 13.2 11.6 Q10.5 11.2 8.2 12.8" fill="none" stroke="#d01818" stroke-width="0.9"/>
</svg>
<div class="t" style="left:197px;top:466px;color:#fff">PDF-Dokument</div>
<div class="t" style="left:294px;top:466px;color:#fff;font-size:11px">30.07.2018</div>
<div class="t" style="left:382px;top:466px;color:#fff;font-size:11px">ER158</div>
<div class="a" style="left:443px;top:463px;width:241px;height:19px;overflow:hidden"><div class="t" style="left:2px;top:3px;color:#fff">Strom Jahresrechnung e.on</div></div>
<div class="a" style="left:174px;top:482px;width:510px;height:19px;background:#efefef"></div>
<div class="a" style="left:162px;top:500px;width:11px;height:1px;background:#dcdcdc"></div>
<div class="a" style="left:291px;top:482px;width:1px;height:19px;background:#e3e3e3"></div>
<div class="a" style="left:379px;top:482px;width:1px;height:19px;background:#e3e3e3"></div>
<div class="a" style="left:442px;top:482px;width:1px;height:19px;background:#e3e3e3"></div>
<svg style="left:177px;top:484px" width="17" height="15" viewBox="0 0 17 15">
<defs><linearGradient id="ge5" x1="0" y1="0" x2="0" y2="1"><stop offset="0" stop-color="#ffffff"/><stop offset="0.55" stop-color="#eef4fb"/><stop offset="1" stop-color="#a8d0f4"/></linearGradient></defs>
<path d="M0.6 6.2 L4.5 1.2 Q8.5 0 12.5 1.2 L16.4 6.2 V14.3 H0.6 Z" fill="url(#ge5)" stroke="#3f4fa0" stroke-width="1"/>
<path d="M3.2 5 Q8.5 0.8 13.8 5 L12.5 6.8 H4.5 Z" fill="#f2d860"/>
<path d="M0.6 14.3 L6 8.8 H11 L16.4 14.3" fill="none" stroke="#3f4fa0" stroke-width="0.9"/>
<path d="M0.6 6.2 L6 8.8 M16.4 6.2 L11 8.8" fill="none" stroke="#3f4fa0" stroke-width="0.8"/>
</svg>
<div class="t" style="left:197px;top:485px;color:#111">E-Mail</div>
<div class="t" style="left:294px;top:485px;color:#111;font-size:11px">31.07.2018</div>
<div class="t" style="left:382px;top:485px;color:#111;font-size:11px">ER153</div>
<div class="a" style="left:443px;top:482px;width:241px;height:19px;overflow:hidden"><div class="t" style="left:2px;top:3px;color:#333">Sofortüberweisung Gebühren</div></div>
<div class="a" style="left:174px;top:501px;width:510px;height:19px;background:#ffffff"></div>
<div class="a" style="left:162px;top:519px;width:11px;height:1px;background:#dcdcdc"></div>
<div class="a" style="left:291px;top:501px;width:1px;height:19px;background:#e3e3e3"></div>
<div class="a" style="left:379px;top:501px;width:1px;height:19px;background:#e3e3e3"></div>
<div class="a" style="left:442px;top:501px;width:1px;height:19px;background:#e3e3e3"></div>
<svg style="left:178px;top:502px" width="16" height="16" viewBox="0 0 16 16">
<defs><linearGradient id="gpg" x1="0" x2="1"><stop offset="0" stop-color="#e2e2e2"/><stop offset="1" stop-color="#fbfbfb"/></linearGradient></defs>
<path d="M0.5 0.5 H9.5 L12.5 3.5 V15.5 H0.5 Z" fill="url(#gpg)" stroke="#9a9a9a" stroke-width="0.9"/>
<path d="M9.5 0.5 V3.5 H12.5" fill="#e0e0e0" stroke="#b0b0b0" stroke-width="0.7"/>
<rect x="6.3" y="6.3" width="8.6" height="8.6" fill="#fff" stroke="#c81010" stroke-width="1.2"/>
<path d="M8.2 12.8 Q9.8 10 10.3 7.8 Q10.6 10.5 13.2 11.6 Q10.5 11.2 8.2 12.8" fill="none" stroke="#d01818" stroke-width="0.9"/>
</svg>
<div class="t" style="left:197px;top:504px;color:#111">PDF-Dokument</div>
<div class="t" style="left:294px;top:504px;color:#111;font-size:11px">31.07.2018</div>
<div class="t" style="left:382px;top:504px;color:#111;font-size:11px">ER159</div>
<div class="a" style="left:443px;top:501px;width:241px;height:19px;overflow:hidden"><div class="t" style="left:2px;top:3px;color:#333">google Internet-Werbekosten OM, Rechnung 5</div></div>
<div class="a" style="left:174px;top:520px;width:510px;height:19px;background:#efefef"></div>
<div class="a" style="left:162px;top:538px;width:11px;height:1px;background:#dcdcdc"></div>
<div class="a" style="left:291px;top:520px;width:1px;height:19px;background:#e3e3e3"></div>
<div class="a" style="left:379px;top:520px;width:1px;height:19px;background:#e3e3e3"></div>
<div class="a" style="left:442px;top:520px;width:1px;height:19px;background:#e3e3e3"></div>
<svg style="left:177px;top:522px" width="17" height="15" viewBox="0 0 17 15">
<defs><linearGradient id="ge7" x1="0" y1="0" x2="0" y2="1"><stop offset="0" stop-color="#ffffff"/><stop offset="0.55" stop-color="#eef4fb"/><stop offset="1" stop-color="#a8d0f4"/></linearGradient></defs>
<path d="M0.6 6.2 L4.5 1.2 Q8.5 0 12.5 1.2 L16.4 6.2 V14.3 H0.6 Z" fill="url(#ge7)" stroke="#3f4fa0" stroke-width="1"/>
<path d="M3.2 5 Q8.5 0.8 13.8 5 L12.5 6.8 H4.5 Z" fill="#f2d860"/>
<path d="M0.6 14.3 L6 8.8 H11 L16.4 14.3" fill="none" stroke="#3f4fa0" stroke-width="0.9"/>
<path d="M0.6 6.2 L6 8.8 M16.4 6.2 L11 8.8" fill="none" stroke="#3f4fa0" stroke-width="0.8"/>
</svg>
<div class="t" style="left:197px;top:523px;color:#111">E-Mail</div>
<div class="t" style="left:294px;top:523px;color:#111;font-size:11px">01.08.2018</div>
<div class="t" style="left:382px;top:523px;color:#111;font-size:11px">ER154</div>
<div class="a" style="left:443px;top:520px;width:241px;height:19px;overflow:hidden"><div class="t" style="left:2px;top:3px;color:#333">Rechtstexte Abonnement, Update-Service (RN</div></div>
<div class="a" style="left:174px;top:539px;width:510px;height:19px;background:#ffffff"></div>
<div class="a" style="left:162px;top:557px;width:11px;height:1px;background:#dcdcdc"></div>
<div class="a" style="left:291px;top:539px;width:1px;height:19px;background:#e3e3e3"></div>
<div class="a" style="left:379px;top:539px;width:1px;height:19px;background:#e3e3e3"></div>
<div class="a" style="left:442px;top:539px;width:1px;height:19px;background:#e3e3e3"></div>
<svg style="left:178px;top:540px" width="16" height="16" viewBox="0 0 16 16">
<defs><linearGradient id="gpg" x1="0" x2="1"><stop offset="0" stop-color="#e2e2e2"/><stop offset="1" stop-color="#fbfbfb"/></linearGradient></defs>
<path d="M0.5 0.5 H9.5 L12.5 3.5 V15.5 H0.5 Z" fill="url(#gpg)" stroke="#9a9a9a" stroke-width="0.9"/>
<path d="M9.5 0.5 V3.5 H12.5" fill="#e0e0e0" stroke="#b0b0b0" stroke-width="0.7"/>
<rect x="6.3" y="6.3" width="8.6" height="8.6" fill="#fff" stroke="#c81010" stroke-width="1.2"/>
<path d="M8.2 12.8 Q9.8 10 10.3 7.8 Q10.6 10.5 13.2 11.6 Q10.5 11.2 8.2 12.8" fill="none" stroke="#d01818" stroke-width="0.9"/>
</svg>
<div class="t" style="left:197px;top:542px;color:#111">PDF-Dokument</div>
<div class="t" style="left:294px;top:542px;color:#111;font-size:11px">01.08.2018</div>
<div class="t" style="left:382px;top:542px;color:#111;font-size:11px">ER155</div>
<div class="a" style="left:443px;top:539px;width:241px;height:19px;overflow:hidden"><div class="t" style="left:2px;top:3px;color:#333">ORCA Rechnung 318614 AVA zu AR5376</div></div>
<div class="a" style="left:174px;top:558px;width:510px;height:19px;background:#efefef"></div>
<div class="a" style="left:162px;top:576px;width:11px;height:1px;background:#dcdcdc"></div>
<div class="a" style="left:291px;top:558px;width:1px;height:19px;background:#e3e3e3"></div>
<div class="a" style="left:379px;top:558px;width:1px;height:19px;background:#e3e3e3"></div>
<div class="a" style="left:442px;top:558px;width:1px;height:19px;background:#e3e3e3"></div>
<svg style="left:177px;top:560px" width="17" height="15" viewBox="0 0 17 15">
<defs><linearGradient id="ge9" x1="0" y1="0" x2="0" y2="1"><stop offset="0" stop-color="#ffffff"/><stop offset="0.55" stop-color="#eef4fb"/><stop offset="1" stop-color="#a8d0f4"/></linearGradient></defs>
<path d="M0.6 6.2 L4.5 1.2 Q8.5 0 12.5 1.2 L16.4 6.2 V14.3 H0.6 Z" fill="url(#ge9)" stroke="#3f4fa0" stroke-width="1"/>
<path d="M3.2 5 Q8.5 0.8 13.8 5 L12.5 6.8 H4.5 Z" fill="#f2d860"/>
<path d="M0.6 14.3 L6 8.8 H11 L16.4 14.3" fill="none" stroke="#3f4fa0" stroke-width="0.9"/>
<path d="M0.6 6.2 L6 8.8 M16.4 6.2 L11 8.8" fill="none" stroke="#3f4fa0" stroke-width="0.8"/>
</svg>
<div class="t" style="left:197px;top:561px;color:#111">E-Mail</div>
<div class="t" style="left:294px;top:561px;color:#111;font-size:11px">01.08.2018</div>
<div class="t" style="left:382px;top:561px;color:#111;font-size:11px">ER156</div>
<div class="a" style="left:443px;top:558px;width:241px;height:19px;overflow:hidden"><div class="t" style="left:2px;top:3px;color:#333">DNS:NET Telefon und DSL</div></div>
<div class="a" style="left:174px;top:577px;width:510px;height:19px;background:#ffffff"></div>
<div class="a" style="left:162px;top:595px;width:11px;height:1px;background:#dcdcdc"></div>
<div class="a" style="left:291px;top:577px;width:1px;height:19px;background:#e3e3e3"></div>
<div class="a" style="left:379px;top:577px;width:1px;height:19px;background:#e3e3e3"></div>
<div class="a" style="left:442px;top:577px;width:1px;height:19px;background:#e3e3e3"></div>
<svg style="left:177px;top:579px" width="17" height="15" viewBox="0 0 17 15">
<defs><linearGradient id="ge10" x1="0" y1="0" x2="0" y2="1"><stop offset="0" stop-color="#ffffff"/><stop offset="0.55" stop-color="#eef4fb"/><stop offset="1" stop-color="#a8d0f4"/></linearGradient></defs>
<path d="M0.6 6.2 L4.5 1.2 Q8.5 0 12.5 1.2 L16.4 6.2 V14.3 H0.6 Z" fill="url(#ge10)" stroke="#3f4fa0" stroke-width="1"/>
<path d="M3.2 5 Q8.5 0.8 13.8 5 L12.5 6.8 H4.5 Z" fill="#f2d860"/>
<path d="M0.6 14.3 L6 8.8 H11 L16.4 14.3" fill="none" stroke="#3f4fa0" stroke-width="0.9"/>
<path d="M0.6 6.2 L6 8.8 M16.4 6.2 L11 8.8" fill="none" stroke="#3f4fa0" stroke-width="0.8"/>
</svg>
<div class="t" style="left:197px;top:580px;color:#111">E-Mail</div>
<div class="t" style="left:294px;top:580px;color:#111;font-size:11px">03.08.2018</div>
<div class="t" style="left:382px;top:580px;color:#111;font-size:11px">S22625</div>
<div class="a" style="left:443px;top:577px;width:241px;height:19px;overflow:hidden"><div class="t" style="left:2px;top:3px;color:#333">Amazon Web Services Invoice Available [Invoi</div></div>

<!-- vscroll -->
<div class="a" style="left:684px;top:359px;width:17px;height:254px;background:#f7f7f7"></div>
<div class="a" style="left:684px;top:425px;width:17px;height:31px;background:#e3e3e3"></div>
<div class="a" style="left:688px;top:364px;width:0;height:0;border-left:4px solid transparent;border-right:4px solid transparent;border-bottom:6px solid #777"></div>
<div class="a" style="left:688px;top:583px;width:0;height:0;border-left:4px solid transparent;border-right:4px solid transparent;border-top:6px solid #999"></div>
<!-- nav bar -->
<div class="a" style="left:162px;top:595px;width:522px;height:18px;background:#fff"></div>
<svg style="left:164px;top:600px" width="180" height="9" viewBox="0 0 180 9">
<g fill="#666">
<rect x="1" y="0" width="1.2" height="8"/><path d="M2.5 4 L6 1 V7 Z"/><path d="M6.5 4 L10 1 V7 Z"/>
<path d="M19 4 L22.5 1 V7 Z"/><path d="M23 4 L26.5 1 V7 Z"/>
<path d="M38 4 L41 1.5 V6.5 Z"/>
<path d="M118 1.5 L121 4 L118 6.5 Z"/>
<path d="M133 1 L136.5 4 L133 7 Z"/><path d="M137 1 L140.5 4 L137 7 Z"/>
<path d="M149 1 L152.5 4 L149 7 Z"/><path d="M153 1 L156.5 4 L153 7 Z"/><rect x="157" y="0" width="1.2" height="8"/>
</g>
<path d="M166 8 V5 Q166 3 168 3 H172 M170 0.5 L173 3 L170 5.5" fill="none" stroke="#555" stroke-width="1.3"/>
</svg>
<div class="t" style="left:219px;top:597px;color:#555;font-size:11.6px">21 von 66</div>
<div class="a" style="left:408px;top:595px;width:38px;height:17px;background:#e6e6e6"></div>
<div class="a" style="left:398px;top:600px;width:0;height:0;border-top:3.5px solid transparent;border-bottom:3.5px solid transparent;border-right:4px solid #aaa"></div>
<div class="a" style="left:673px;top:600px;width:0;height:0;border-top:3.5px solid transparent;border-bottom:3.5px solid transparent;border-left:4px solid #777"></div>

<!-- ============ BOTTOM TABS ============ -->
<div class="a" style="left:159px;top:615px;width:137px;height:32px;background:#f7f7f7;border-left:1px solid #bcbcbc"></div>
<svg style="left:168px;top:623px" width="16" height="17" viewBox="0 0 16 17">
<rect x="0.5" y="0.5" width="11" height="13" fill="#e6cf86" stroke="#c4a45a" stroke-width="0.8"/>
<rect x="3" y="3" width="11" height="13.5" fill="#efd990" stroke="#c4a45a" stroke-width="0.8"/>
<rect x="12.5" y="10.5" width="2.5" height="5.5" fill="#eee" stroke="#666" stroke-width="0.7"/>
</svg>
<div class="t" style="left:190px;top:625px;color:#3c3c3c">Aktive Dokumente</div>
<div class="a" style="left:295px;top:616px;width:158px;height:31px;background:#e6e6e6;border:1px solid #c8c8c8"></div>
<svg style="left:303px;top:622px" width="14" height="16" viewBox="0 0 14 16">
<defs><linearGradient id="ga2" x1="0" x2="1"><stop offset="0" stop-color="#0b3fa0"/><stop offset="0.35" stop-color="#1a6ee0"/><stop offset="1" stop-color="#0a3c98"/></linearGradient></defs>
<path d="M1.5 1 Q1.5 0.2 2.5 0.2 H12 Q13 0.2 13 1.2 V14.5 Q13 15.5 12 15.5 H2.5 Q0.7 15.5 0.7 14.5 Z" fill="url(#ga2)"/>
<rect x="2" y="1.5" width="1.3" height="12" fill="#5fb0ff" opacity="0.8"/>
<path d="M5.5 2 H12 V7 H5.5 Z" fill="#c8dcf4"/>
<path d="M5.5 8.5 H12 V13.5 H5.5 Z" fill="#c8dcf4"/>
<rect x="6" y="2.5" width="2" height="4" fill="#fff" opacity="0.8"/>
<rect x="6" y="9" width="2" height="4" fill="#fff" opacity="0.8"/>
<rect x="7.5" y="4" width="3" height="1" fill="#d07030"/>
<rect x="7.5" y="10.5" width="3" height="1" fill="#d07030"/>
<rect x="4.5" y="7" width="1.5" height="2" fill="#111"/>
</svg>
<div class="t" style="left:324px;top:624px;color:#3c3c3c">Archivierte Dokumente</div>
<div class="a" style="left:452px;top:616px;width:89px;height:31px;background:#e6e6e6;border:1px solid #c8c8c8"></div>
<svg style="left:460px;top:621px" width="17" height="17" viewBox="0 0 17 17">
<rect x="2" y="1.5" width="11.5" height="10.5" fill="#f2f2f2" stroke="#9a9a9a" stroke-width="0.8"/>
<g fill="#555"><rect x="3" y="0" width="1" height="2"/><rect x="5" y="0" width="1" height="2"/><rect x="7" y="0" width="1" height="2"/><rect x="9" y="0" width="1" height="2"/><rect x="11" y="0" width="1" height="2"/></g>
<rect x="3.5" y="3.5" width="8.5" height="5" fill="#7fbcc4"/>
<g fill="#e8f4f6"><rect x="4.5" y="4.5" width="1" height="1"/><rect x="6.5" y="4.5" width="1" height="1"/><rect x="8.5" y="4.5" width="1" height="1"/><rect x="10.5" y="4.5" width="1" height="1"/></g>
<path d="M9.5 9.5 L15.5 2.5" stroke="#c8283a" stroke-width="2"/>
<path d="M15 2 L16.5 0.8" stroke="#f0a0a8" stroke-width="1.5"/>
<circle cx="5" cy="12" r="4.3" fill="#f4f4f4" stroke="#666" stroke-width="0.9" stroke-dasharray="1.2 0.6"/>
<path d="M4.8 9.5 V12 L6.8 13.2" stroke="#333" stroke-width="0.9" fill="none"/>
</svg>
<div class="t" style="left:482px;top:624px;color:#3c3c3c">Aufgaben</div>
<div class="a" style="left:540px;top:616px;width:93px;height:31px;background:#e6e6e6;border:1px solid #c8c8c8"></div>
<svg style="left:549px;top:621px" width="14" height="17" viewBox="0 0 14 17">
<path d="M1 2 L3 16 H11 L13 2 Z" fill="#eef3f7" stroke="#8a98a4" stroke-width="0.8"/>
<ellipse cx="7" cy="2" rx="6.5" ry="1.5" fill="#dde6ec" stroke="#7d8c97" stroke-width="0.8"/>
<path d="M4.5 8 l2 -2 l1.5 2 M9 8 l1 2.5 l-2 1.2 M5.5 12 l-1.2 -2 l2.5 0" stroke="#2563c9" stroke-width="1.5" fill="none"/>
</svg>
<div class="t" style="left:570px;top:624px;color:#3c3c3c">Papierkorb</div>

<!-- ============ PREVIEW ============ -->
<svg style="left:716px;top:357px" width="136" height="8" viewBox="0 0 136 8">
<g fill="#c4c4c4">
<rect x="1" y="0.5" width="2" height="2"/><rect x="1" y="5" width="2" height="2"/><rect x="6" y="0.5" width="2" height="2"/><rect x="6" y="5" width="2" height="2"/><rect x="11" y="0.5" width="2" height="2"/><rect x="11" y="5" width="2" height="2"/><rect x="16" y="0.5" width="2" height="2"/><rect x="16" y="5" width="2" height="2"/><rect x="21" y="0.5" width="2" height="2"/><rect x="21" y="5" width="2" height="2"/><rect x="26" y="0.5" width="2" height="2"/><rect x="26" y="5" width="2" height="2"/><rect x="31" y="0.5" width="2" height="2"/><rect x="31" y="5" width="2" height="2"/><rect x="36" y="0.5" width="2" height="2"/><rect x="36" y="5" width="2" height="2"/><rect x="41" y="0.5" width="2" height="2"/><rect x="41" y="5" width="2" height="2"/><rect x="46" y="0.5" width="2" height="2"/><rect x="46" y="5" width="2" height="2"/><rect x="51" y="0.5" width="2" height="2"/><rect x="51" y="5" width="2" height="2"/><rect x="56" y="0.5" width="2" height="2"/><rect x="56" y="5" width="2" height="2"/><rect x="61" y="0.5" width="2" height="2"/><rect x="61" y="5" width="2" height="2"/><rect x="66" y="0.5" width="2" height="2"/><rect x="66" y="5" width="2" height="2"/><rect x="71" y="0.5" width="2" height="2"/><rect x="71" y="5" width="2" height="2"/><rect x="76" y="0.5" width="2" height="2"/><rect x="76" y="5" width="2" height="2"/><rect x="81" y="0.5" width="2" height="2"/><rect x="81" y="5" width="2" height="2"/><rect x="86" y="0.5" width="2" height="2"/><rect x="86" y="5" width="2" height="2"/><rect x="91" y="0.5" width="2" height="2"/><rect x="91" y="5" width="2" height="2"/><rect x="96" y="0.5" width="2" height="2"/><rect x="96" y="5" width="2" height="2"/><rect x="101" y="0.5" width="2" height="2"/><rect x="101" y="5" width="2" height="2"/><rect x="106" y="0.5" width="2" height="2"/><rect x="106" y="5" width="2" height="2"/><rect x="111" y="0.5" width="2" height="2"/><rect x="111" y="5" width="2" height="2"/><rect x="116" y="0.5" width="2" height="2"/><rect x="116" y="5" width="2" height="2"/><rect x="121" y="0.5" width="2" height="2"/><rect x="121" y="5" width="2" height="2"/><rect x="126" y="0.5" width="2" height="2"/><rect x="126" y="5" width="2" height="2"/><rect x="131" y="0.5" width="2" height="2"/><rect x="131" y="5" width="2" height="2"/>
</g></svg>
<svg style="left:853px;top:357px" width="6" height="10" viewBox="0 0 6 10">
<rect x="0.6" y="0.6" width="6" height="8.8" fill="#f4d0d0" stroke="#3a0a28" stroke-width="1.2"/>
<path d="M1.5 2.5 L5 5.5 L1.5 8.5 Z" fill="#f06060" stroke="#333" stroke-width="0.5"/>
</svg>
<div class="a" style="left:714px;top:368px;width:145px;height:226px;background:#fff;border:1px solid #c6c6c6;border-right:none"></div>
<svg style="left:715px;top:368px;overflow:hidden" width="131" height="208" viewBox="0 0 131 208"><defs><pattern id="hatch" width="3" height="3" patternUnits="userSpaceOnUse"><rect width="3" height="3" fill="#9b5d71"/><rect x="2" y="0" width="1" height="1" fill="#a87384"/><rect x="1" y="1" width="1" height="1" fill="#a87384"/><rect x="0" y="2" width="1" height="1" fill="#a87384"/></pattern></defs><rect width="131" height="208" fill="url(#hatch)"/><rect x="10" y="8" width="111" height="157" fill="#fff"/><rect x="10" y="179" width="111" height="61" fill="#fff"/><text x="92" y="22" font-family="Liberation Sans" font-weight="bold" font-style="italic" font-size="11.5" letter-spacing="-0.4" fill="#111" stroke="#111" stroke-width="0.5" transform="translate(0,3) scale(1,0.78)">e·on</text><rect x="22" y="33" width="32" height="1" fill="#b0b0b0"/><rect x="12" y="34" width="3" height="4" fill="#555"/><rect x="20" y="36" width="2" height="3" fill="#555"/><rect x="28" y="37" width="18" height="1" fill="#a6a6a6"/><rect x="26" y="39" width="25" height="1" fill="#a6a6a6"/><rect x="51" y="36" width="6" height="6" fill="#444"/><rect x="24" y="42" width="14" height="1" fill="#a6a6a6"/><rect x="24" y="44" width="5" height="1" fill="#a6a6a6"/><rect x="24" y="46" width="10" height="1" fill="#a6a6a6"/><rect x="24" y="48" width="8" height="1" fill="#a6a6a6"/><rect x="24" y="50" width="15" height="1" fill="#a6a6a6"/><rect x="24" y="52" width="20" height="1" fill="#a6a6a6"/><rect x="93" y="33" width="15" height="1" fill="#a6a6a6"/><rect x="93" y="36" width="3" height="1" fill="#555"/><rect x="93" y="38" width="13" height="1" fill="#a6a6a6"/><rect x="93" y="40" width="14" height="1" fill="#a6a6a6"/><rect x="93" y="42" width="12" height="1" fill="#a6a6a6"/><rect x="93" y="45" width="2" height="1" fill="#555"/><rect x="93" y="47" width="13" height="1" fill="#a6a6a6"/><rect x="93" y="49" width="13" height="1" fill="#a6a6a6"/><rect x="93" y="51" width="14" height="1" fill="#a6a6a6"/><rect x="93" y="54" width="3" height="1" fill="#555"/><rect x="93" y="56" width="15" height="1" fill="#a6a6a6"/><rect x="93" y="58" width="10" height="1" fill="#a6a6a6"/><rect x="93" y="60" width="8" height="1" fill="#a6a6a6"/><rect x="93" y="64" width="14" height="1" fill="#a6a6a6"/><rect x="93" y="66" width="10" height="1" fill="#a6a6a6"/><rect x="93" y="68" width="10" height="1" fill="#a6a6a6"/><rect x="93" y="72" width="12" height="1" fill="#a6a6a6"/><rect x="93" y="74" width="8" height="1" fill="#a6a6a6"/><rect x="93" y="78" width="8" height="1" fill="#a6a6a6"/><rect x="22" y="62" width="35" height="1.6" fill="#333"/><rect x="12" y="61" width="100" height="0.6" fill="#c8c8c8"/><rect x="22" y="65" width="30" height="1" fill="#a6a6a6"/><rect x="22" y="68" width="10" height="1" fill="#a6a6a6"/><rect x="22" y="70" width="45" height="1" fill="#a6a6a6"/><rect x="22" y="74" width="22" height="1" fill="#a6a6a6"/><rect x="22" y="77" width="50" height="1" fill="#a6a6a6"/><rect x="22" y="79" width="60" height="1" fill="#a6a6a6"/><rect x="22" y="81" width="8" height="1" fill="#a6a6a6"/><rect x="22" y="84" width="25" height="1.2" fill="#444"/><rect x="23" y="87" width="18" height="5" fill="none" stroke="#aaa" stroke-width="0.5"/><rect x="52" y="87" width="15" height="5" fill="none" stroke="#aaa" stroke-width="0.5"/><rect x="68" y="87" width="18" height="5" fill="none" stroke="#aaa" stroke-width="0.5"/><rect x="30" y="90" width="10" height="1" fill="#555"/><rect x="56" y="90" width="10" height="1" fill="#555"/><rect x="75" y="90" width="10" height="1" fill="#555"/><rect x="94" y="83" width="11" height="16" fill="#fff" stroke="#222" stroke-width="1"/><rect x="94" y="83" width="5" height="3" fill="#222"/><rect x="95" y="88" width="9" height="1" fill="#a6a6a6"/><rect x="95" y="91" width="9" height="1" fill="#a6a6a6"/><rect x="94" y="96" width="11" height="3" fill="#222"/><rect x="22" y="95" width="24" height="1.2" fill="#444"/><rect x="23" y="98" width="30" height="1" fill="#a6a6a6"/><rect x="23" y="100" width="30" height="1" fill="#a6a6a6"/><rect x="23" y="103" width="28" height="1" fill="#a6a6a6"/><rect x="23" y="102" width="12" height="1.5" fill="#444"/><rect x="54" y="97" width="32" height="1" fill="#a6a6a6"/><rect x="54" y="99" width="34" height="1" fill="#a6a6a6"/><rect x="54" y="101" width="30" height="1" fill="#a6a6a6"/><rect x="54" y="103" width="24" height="1" fill="#a6a6a6"/><rect x="54" y="107" width="30" height="1" fill="#a6a6a6"/><rect x="54" y="109" width="32" height="1" fill="#a6a6a6"/><rect x="54" y="111" width="30" height="1" fill="#a6a6a6"/><rect x="23" y="107" width="28" height="1" fill="#a6a6a6"/><rect x="23" y="109" width="28" height="1" fill="#a6a6a6"/><rect x="23" y="111" width="28" height="1" fill="#a6a6a6"/><rect x="23" y="113" width="26" height="1" fill="#a6a6a6"/><rect x="23" y="115" width="20" height="1" fill="#a6a6a6"/><rect x="12" y="117" width="105" height="0.6" fill="#bbb"/><rect x="22" y="120" width="46" height="1" fill="#a6a6a6"/><rect x="22" y="124" width="15" height="1" fill="#444"/><rect x="23" y="129" width="34" height="1" fill="#555"/><rect x="67" y="129" width="38" height="1" fill="#555"/><rect x="23" y="132" width="36" height="1" fill="#a6a6a6"/><rect x="23" y="134" width="34" height="1" fill="#a6a6a6"/><rect x="23" y="136" width="14" height="1" fill="#a6a6a6"/><rect x="23" y="138" width="20" height="1" fill="#a6a6a6"/><rect x="23" y="140" width="35" height="1" fill="#a6a6a6"/><rect x="23" y="142" width="35" height="1" fill="#a6a6a6"/><rect x="23" y="145" width="30" height="1" fill="#a6a6a6"/><rect x="67" y="132" width="38" height="1" fill="#a6a6a6"/><rect x="67" y="134" width="38" height="1" fill="#a6a6a6"/><rect x="67" y="136" width="36" height="1" fill="#a6a6a6"/><rect x="67" y="138" width="30" height="1" fill="#a6a6a6"/><rect x="67" y="140" width="26" height="1" fill="#a6a6a6"/><rect x="67" y="142" width="28" height="1" fill="#a6a6a6"/><rect x="67" y="145" width="30" height="1" fill="#a6a6a6"/><rect x="16" y="127" width="1" height="25" fill="#aaa"/><rect x="22" y="156" width="80" height="1" fill="#a6a6a6"/><rect x="22" y="158" width="45" height="1" fill="#a6a6a6"/><rect x="15" y="186" width="30" height="1.6" fill="#333"/><rect x="84" y="186" width="25" height="1.4" fill="#444"/><rect x="103" y="189" width="5" height="1" fill="#a6a6a6"/><rect x="15" y="197" width="12" height="1" fill="#555"/><rect x="16.0" y="200" width="3" height="1" fill="#888"/><rect x="15.0" y="203" width="6" height="5" rx="2" fill="none" stroke="#aaa" stroke-width="0.5"/><rect x="23.8" y="200" width="3" height="1" fill="#888"/><rect x="22.8" y="203" width="6" height="5" rx="2" fill="none" stroke="#aaa" stroke-width="0.5"/><rect x="31.6" y="200" width="3" height="1" fill="#888"/><rect x="30.6" y="203" width="6" height="5" rx="2" fill="none" stroke="#aaa" stroke-width="0.5"/><rect x="39.4" y="200" width="3" height="1" fill="#888"/><rect x="38.4" y="203" width="6" height="5" rx="2" fill="none" stroke="#aaa" stroke-width="0.5"/><rect x="47.2" y="200" width="3" height="1" fill="#888"/><rect x="46.2" y="203" width="6" height="5" rx="2" fill="none" stroke="#aaa" stroke-width="0.5"/><rect x="55.0" y="200" width="3" height="1" fill="#888"/><rect x="54.0" y="203" width="6" height="5" rx="2" fill="none" stroke="#aaa" stroke-width="0.5"/><rect x="62.8" y="200" width="3" height="1" fill="#888"/><rect x="61.8" y="203" width="6" height="5" rx="2" fill="none" stroke="#aaa" stroke-width="0.5"/><rect x="70.6" y="200" width="3" height="1" fill="#888"/><rect x="69.6" y="203" width="6" height="5" rx="2" fill="none" stroke="#aaa" stroke-width="0.5"/><rect x="78.4" y="200" width="3" height="1" fill="#888"/><rect x="77.4" y="203" width="6" height="5" rx="2" fill="none" stroke="#aaa" stroke-width="0.5"/><rect x="86.2" y="200" width="3" height="1" fill="#888"/><rect x="85.2" y="203" width="6" height="5" rx="2" fill="none" stroke="#aaa" stroke-width="0.5"/><rect x="94.0" y="200" width="3" height="1" fill="#888"/><rect x="93.0" y="203" width="6" height="5" rx="2" fill="none" stroke="#aaa" stroke-width="0.5"/><rect x="101.8" y="200" width="3" height="1" fill="#888"/><rect x="100.8" y="203" width="6" height="5" rx="2" fill="none" stroke="#aaa" stroke-width="0.5"/></svg>
<div class="a" style="left:846px;top:368px;width:13px;height:208px;background:#f7f7f7"></div>
<div class="a" style="left:846px;top:386px;width:13px;height:32px;background:#e6e6e6"></div>
<div class="a" style="left:848px;top:373px;width:0;height:0;border-left:4px solid transparent;border-right:4px solid transparent;border-bottom:6px solid #999"></div>
<div class="a" style="left:848px;top:565px;width:0;height:0;border-left:4px solid transparent;border-right:4px solid transparent;border-top:6px solid #999"></div>
<div class="a" style="left:715px;top:576px;width:131px;height:17px;background:#f7f7f7"></div>
<div class="a" style="left:732px;top:576px;width:74px;height:17px;background:#e3e3e3"></div>
<div class="a" style="left:720px;top:581px;width:0;height:0;border-top:4px solid transparent;border-bottom:4px solid transparent;border-right:5px solid #999"></div>
<div class="a" style="left:835px;top:581px;width:0;height:0;border-top:4px solid transparent;border-bottom:4px solid transparent;border-left:5px solid #999"></div>
<div class="a" style="left:714px;top:604px;width:145px;height:44px;background:#fff;border:1px solid #7a7a7a;border-right:none;border-bottom:none;overflow:hidden">
<div class="t" style="left:5px;top:2px;color:#111;font-size:12px;transform:scaleX(0.87);transform-origin:0 0">06.08.2018 Strom Jahresrechnung</div>
<div class="t" style="left:7px;top:15px;color:#111;font-size:12px;transform:scaleX(0.86);transform-origin:0 0">Strom Jahresrechnung, Büroadresse</div>
<div class="t" style="left:13px;top:28px;color:#111;font-size:12px;transform:scaleX(0.86);transform-origin:0 0">4240 an 70000&nbsp; 780,61 EUR Ust</div>
</div>
<!-- status grip -->
<svg style="left:843px;top:653px" width="12" height="12" viewBox="0 0 12 12"><g fill="#c9a3b0">
<rect x="9" y="1" width="2" height="2"/><rect x="5" y="5" width="2" height="2"/><rect x="9" y="5" width="2" height="2"/>
<rect x="1" y="9" width="2" height="2"/><rect x="5" y="9" width="2" height="2"/><rect x="9" y="9" width="2" height="2"/></g></svg>
</body></html>
